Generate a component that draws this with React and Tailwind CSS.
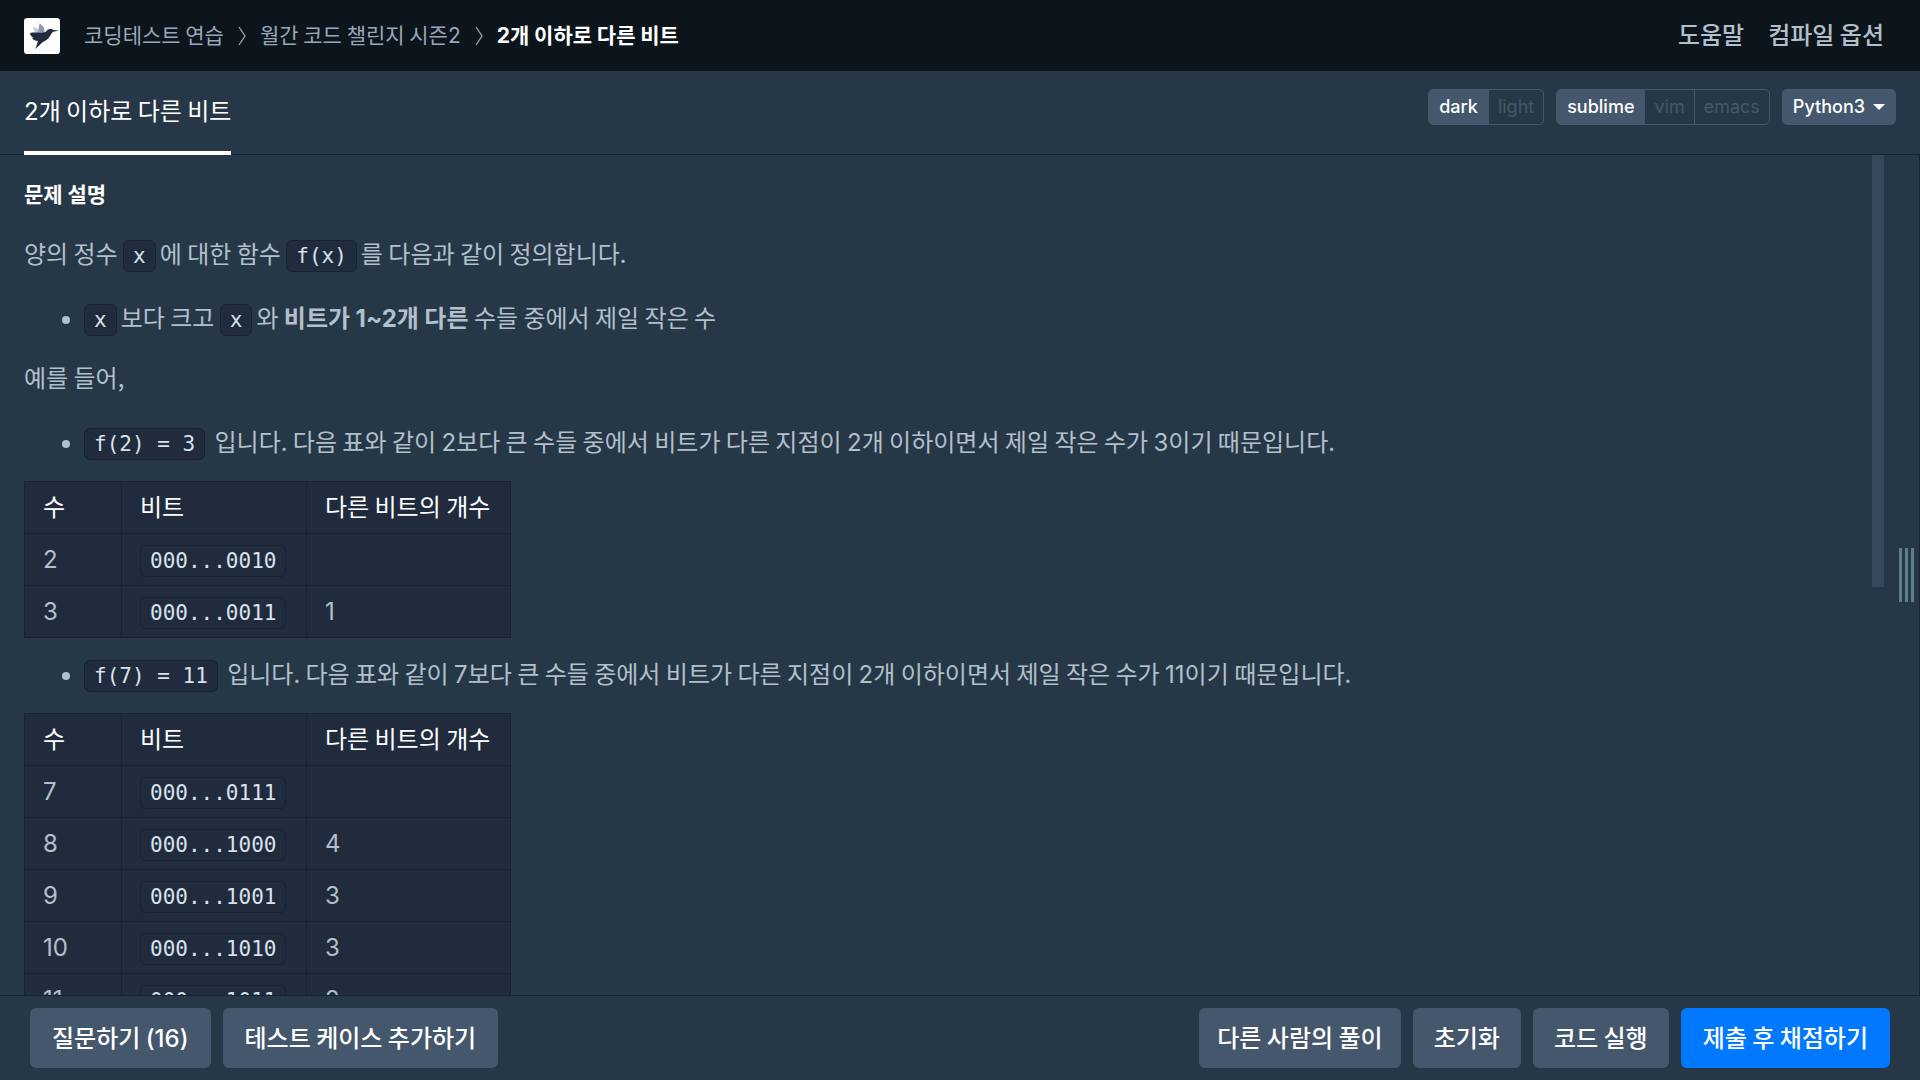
import React from "react";

const crumbs = ["코딩테스트 연습", "월간 코드 챌린지 시즌2"];

const firstTable = [
  ["2", "000...0010", ""],
  ["3", "000...0011", "1"],
];

const secondTable = [
  ["7", "000...0111", ""],
  ["8", "000...1000", "4"],
  ["9", "000...1001", "3"],
  ["10", "000...1010", "3"],
  ["11", "000...1011", "2"],
];

function Logo() {
  return (
    <svg viewBox="0 0 108 108" className="size-9" aria-hidden="true">
      <rect width="108" height="108" rx="10" fill="#fff" />
      <path d="M26 26 L48 36 L52 46 L34 44 Z" fill="#c3c7cf" />
      <path d="M47 15 L60 29 L62 44 L42 44 Z" fill="#9298a5" />
      <path
        d="M18 45 C34 42 50 46 62 43 C68 40 70 33 79 33 C84 33 86 35 90 36 L105 38 L87 41 C82 45 80 53 74 60 C68 67 60 70 53 75 C46 82 40 89 33 93 C38 86 39 77 42 69 C34 68 26 64 24 59 L30 60 C22 56 18 51 18 45 Z"
        fill="#212b3d"
      />
    </svg>
  );
}

function Chevron() {
  return (
    <svg viewBox="0 0 10 20" className="mx-[13px] h-5 w-2.5" fill="none" stroke="#98a8b9" strokeWidth="1.3" aria-hidden="true">
      <path d="M2 1 L8 10 L2 19" />
    </svg>
  );
}

/* Latin digits and punctuation set in Inter within Korean text */
function N({ children }) {
  return <span className="font-['Inter',sans-serif] leading-none">{children}</span>;
}

function Code({ children }) {
  return (
    <code className="mr-1 rounded-md border border-[#172334] bg-[#202b3d] px-[9px] py-[3px] font-['DejaVu_Sans_Mono','Liberation_Mono',monospace] text-[21px] leading-none whitespace-nowrap text-[#d7e2eb]">
      {children}
    </code>
  );
}

function BitTable({ rows }) {
  const cell = "h-[52px] border border-[#172334] px-[18px] pt-0 pb-1 text-left";
  return (
    <table className="w-[487px] table-fixed border-collapse border border-[#172334] bg-[#202b3d]">
      <colgroup>
        <col className="w-[97px]" />
        <col className="w-[185px]" />
        <col />
      </colgroup>
      <thead>
        <tr className="text-white">
          <th className={cell + " font-normal"}>수</th>
          <th className={cell + " font-normal"}>비트</th>
          <th className={cell + " font-normal whitespace-nowrap"}>다른 비트의 개수</th>
        </tr>
      </thead>
      <tbody>
        {rows.map(([n, bits, diff]) => (
          <tr key={n}>
            <td className={cell}><N>{n}</N></td>
            <td className={cell}>
              <Code>{bits}</Code>
            </td>
            <td className={cell}><N>{diff}</N></td>
          </tr>
        ))}
      </tbody>
    </table>
  );
}

function Bullet({ children, className }) {
  return (
    <ul className={"list-disc pl-15 marker:font-['Inter',sans-serif] " + className}>
      <li>{children}</li>
    </ul>
  );
}

function Toggle({ options, active }) {
  return (
    <div className="flex h-9 divide-x divide-[#44576c] overflow-hidden rounded-[5px] border border-[#44576c]">
      {options.map((o) => (
        <button
          key={o}
          type="button"
          className={
            "text-lg leading-6 " +
            (o === active ? "bg-[#44576c] px-[10px] font-medium text-white" : "px-[9px] text-[#44576c]")
          }
        >
          {o}
        </button>
      ))}
    </div>
  );
}

const pads = { sm: "px-[18px] ", md: "px-[21px] ", lg: "px-[22px] " };

function Action({ children, primary, size = "lg" }) {
  return (
    <button
      type="button"
      className={
        "h-15 rounded-md pb-0.5 font-medium whitespace-nowrap text-white " +
        pads[size] +
        (primary ? "bg-[#0078ff]" : "bg-[#44576c]")
      }
    >
      {children}
    </button>
  );
}

export default function App() {
  return (
    <div className="flex h-screen flex-col overflow-hidden bg-[#263747] font-['Noto_Sans_CJK_KR',sans-serif] text-2xl leading-9 text-[#b2c0cc]">
      <header className="flex h-[71px] shrink-0 items-center justify-between bg-[#0c151c] pr-9 pl-6">
        <nav className="flex items-center text-[21px] text-[#98a8b9]">
          <a href="#home" aria-label="홈" className="mr-6">
            <Logo />
          </a>
          {crumbs.map((c) => (
            <React.Fragment key={c}>
              <a href="#crumb" className="pb-1">{c.replace(/\d+$/, "")}<N>{c.match(/\d+$/)}</N></a>
              <Chevron />
            </React.Fragment>
          ))}
          <span className="pb-1 font-bold text-white"><N>2</N>개 이하로 다른 비트</span>
        </nav>
        <nav className="flex gap-6 pb-1 font-medium">
          <a href="#help">도움말</a>
          <a href="#compile">컴파일 옵션</a>
        </nav>
      </header>

      <div className="flex h-[84px] shrink-0 items-start justify-between border-b border-[#172334] px-6">
        <a href="#problem" className="flex h-[84px] items-center border-b-4 border-white pb-0.5 text-white">
          <span><N>2</N>개 이하로 다른 비트</span>
        </a>
        <div className="flex gap-3 pt-[18px] font-['Inter',sans-serif]">
          <Toggle options={["dark", "light"]} active="dark" />
          <Toggle options={["sublime", "vim", "emacs"]} active="sublime" />
          <button type="button" className="flex h-9 items-center rounded-[5px] bg-[#44576c] px-[11px] text-lg font-medium text-white">
            Python3
            <span className="ml-2 border-x-[6px] border-t-[6px] border-x-transparent border-t-white" />
          </button>
        </div>
      </div>

      <div className="flex min-h-0 flex-1 border-r border-[#172334]">
        <main className="min-w-0 flex-1 overflow-hidden pt-[22px] pl-6">
          <h6 className="mb-[26px] text-[21px] leading-8 font-bold text-white">문제 설명</h6>
          <p className="mb-7">
            양의 정수 <Code>x</Code>에 대한 함수 <Code>f(x)</Code>를 다음과 같이 정의합니다.
          </p>
          <Bullet className="mb-6">
            <Code>x</Code>보다 크고 <Code>x</Code>와 <strong>비트가 <N>1~2</N>개 다른</strong> 수들 중에서 제일 작은 수
          </Bullet>
          <p className="mb-7">예를 들어,</p>
          <Bullet className="mb-[22px]">
            <Code>f(2) = 3</Code> 입니다. 다음 표와 같이 <N>2</N>보다 큰 수들 중에서 비트가 다른 지점이 <N>2</N>개 이하이면서 제일 작은 수가 <N>3</N>이기 때문입니다.
          </Bullet>
          <BitTable rows={firstTable} />
          <Bullet className="mt-[17px] mb-[22px]">
            <Code>f(7) = 11</Code> 입니다. 다음 표와 같이 <N>7</N>보다 큰 수들 중에서 비트가 다른 지점이 <N>2</N>개 이하이면서 제일 작은 수가 <N>11</N>이기 때문입니다.
          </Bullet>
          <BitTable rows={secondTable} />
        </main>
        <div className="w-3 shrink-0">
          <div className="h-[432px] bg-[#37485d]" />
        </div>
        <div className="flex w-[35px] shrink-0 items-center justify-center">
          <div className="ml-2.5 flex h-[54px] gap-[3px]">
            <span className="w-[3px] bg-[#5f7d8b]" />
            <span className="w-[3px] bg-[#5f7d8b]" />
            <span className="w-[3px] bg-[#5f7d8b]" />
          </div>
        </div>
      </div>

      <footer className="flex h-[85px] shrink-0 items-start justify-between border-t border-[#172334] px-[30px] pt-3">
        <div className="flex gap-3">
          <Action>질문하기 <N>(16)</N></Action>
          <Action>테스트 케이스 추가하기</Action>
        </div>
        <div className="flex gap-3">
          <Action size="sm">다른 사람의 풀이</Action>
          <Action size="md">초기화</Action>
          <Action size="md">코드 실행</Action>
          <Action primary>제출 후 채점하기</Action>
        </div>
      </footer>
    </div>
  );
}
